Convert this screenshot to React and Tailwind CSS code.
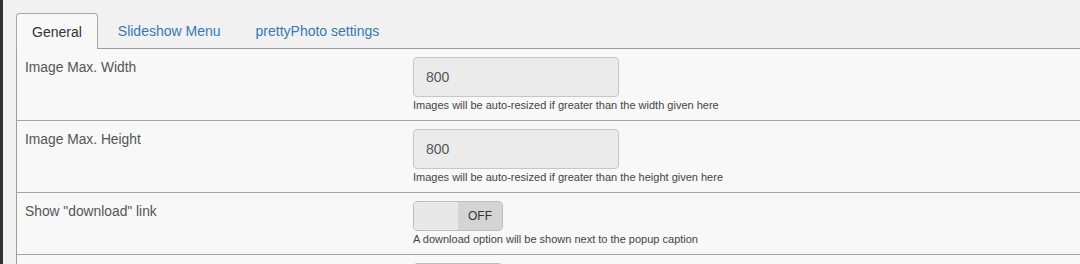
const TABS = ['General', 'Slideshow Menu', 'prettyPhoto settings'];

function TextField({ value }) {
    return (
        <div className="w-[206px] h-10 flex items-center pl-3 bg-[#ebebeb] border border-[#c6c6c6] rounded text-[14px] text-[#555]">
            {value}
        </div>
    );
}

function Toggle() {
    return (
        <div className="w-[90px] h-[30px] flex border border-[#bdbdbd] rounded overflow-hidden">
            <div className="flex-1 bg-[#e8e8e8]" />
            <div className="w-[44px] bg-[#d4d4d4] flex items-center justify-center text-[12px] text-[#333]">OFF</div>
        </div>
    );
}

function Row({ label, help, children }) {
    return (
        <div className="flex border-b border-[#a3a3a3] bg-[#f8f8f8]">
            <div className="w-[396px] shrink-0 pl-2 pt-[9px] text-[13.8px] leading-5 text-[#555]">{label}</div>
            <div className="pt-2 pb-2">
                {children}
                {help && <div className="text-[11px] leading-[14px] text-[#444] mt-[1px]">{help}</div>}
            </div>
        </div>
    );
}

export default function App() {
    return (
        <div className="flex min-h-screen bg-[#f1f1f1] font-['Liberation_Sans',Arial,sans-serif]">
            <div className="w-[3px] shrink-0 bg-[#333]" />
            <div className="flex-1 pl-[13px] pt-[13px]">
                <div className="flex gap-[5px] border-b border-[#9c9c9c]">
                    {TABS.map((tab, i) => (
                        <div
                            key={tab}
                            className={`px-[15px] pt-[2px] h-[35px] flex items-center text-[14px] ${
                                i === 0
                                    ? 'bg-[#f8f8f8] border border-b-0 border-[#a8a8a8] rounded-t text-[#333] -mb-px h-[36px]'
                                    : 'text-[#337ab7]'
                            }`}
                        >
                            {tab}
                        </div>
                    ))}
                </div>
                <div className="border-l border-[#9c9c9c]">
                    <Row label="Image Max. Width" help="Images will be auto-resized if greater than the width given here">
                        <TextField value="800" />
                    </Row>
                    <Row label="Image Max. Height" help="Images will be auto-resized if greater than the height given here">
                        <TextField value="800" />
                    </Row>
                    <Row label={'Show "download" link'} help="A download option will be shown next to the popup caption">
                        <Toggle />
                    </Row>
                    <Row label="" help="">
                        <Toggle />
                    </Row>
                </div>
            </div>
        </div>
    );
}
